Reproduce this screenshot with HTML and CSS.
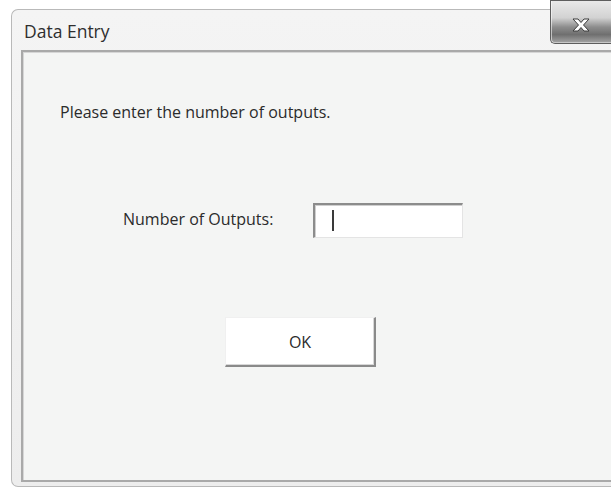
FILE: index.html
```html
<!DOCTYPE html>
<html lang="en">
<head>
<meta charset="utf-8">
<title>Data Entry</title>
<link rel="stylesheet" href="styles.css">
</head>
<body>
<div class="window">
  <div class="titlebar">
    <span class="title">Data Entry</span>
    <button class="close" aria-label="Close">
      <svg width="22" height="16" viewBox="0 0 22 16">
        <path d="M3 2 L8 2 L11 5.5 L14 2 L19 2 L13.5 8 L19 14 L14 14 L11 10.5 L8 14 L3 14 L8.5 8 Z" fill="#ffffff" stroke="#3c3c3c" stroke-width="1" stroke-linejoin="round"/>
      </svg>
    </button>
  </div>
  <div class="client">
    <p class="prompt">Please enter the number of outputs.</p>
    <div class="field">
      <label class="field-label" for="outputs">Number of Outputs:</label>
      <div class="textbox" id="outputs"><span class="caret"></span></div>
    </div>
    <button class="ok">OK</button>
  </div>
</div>
</body>
</html>
```

FILE: styles.css
```css
html, body {
  margin: 0;
  padding: 0;
  background: #ffffff;
  overflow: hidden;
  width: 611px;
  height: 489px;
  font-family: "Open Sans", "Noto Sans", "DejaVu Sans", sans-serif;
}

.window {
  margin: 9px 0 0 11px;
  width: 600px;
  height: 478px;
  border: 1px solid #b9b9b9;
  border-right: none;
  border-radius: 7px 0 0 7px;
  background: linear-gradient(180deg, #f4f4f4 0%, #ededed 100%);
  padding: 0 0 0 9px;
  box-sizing: border-box;
  display: flex;
  flex-direction: column;
}

.titlebar {
  position: relative;
  height: 40px;
  flex: none;
  display: flex;
  align-items: center;
}

.title {
  font-size: 17.5px;
  color: #2e2e2e;
  margin-left: 3px;
  margin-top: 1px;
}

/* caption close button, clipped by the top of the screen */
.close {
  position: absolute;
  right: 0;
  top: -10px;
  width: 61px;
  height: 44px;
  border: 1px solid #5e5e5e;
  border-right: none;
  border-radius: 0 0 0 5px;
  background: linear-gradient(180deg, #e9e9e9 0%, #d2d2d2 40%, #8d8d8d 62%, #6f6f6f 80%, #a6a6a6 100%);
  box-shadow: inset 1px 0 0 rgba(255,255,255,0.55), inset 0 -1px 0 rgba(255,255,255,0.4);
  padding: 0;
  display: flex;
  align-items: flex-end;
  justify-content: flex-start;
}

.close svg {
  margin: 0 0 10px 19px;
}

.client {
  flex: none;
  height: 432px;
  box-sizing: border-box;
  border-top: 2px solid #a9a9a9;
  border-left: 2px solid #a9a9a9;
  border-bottom: 2px solid #a9a9a9;
  background: #f4f5f4;
  box-shadow: inset 1px 1px 0 #d6d6d6;
  padding: 0 0 0 37px;
  color: #2b2b2b;
}

.prompt {
  margin: 50px 0 0 0;
  font-size: 16px;
  line-height: 20px;
}

.field {
  margin: 81px 0 0 63px;
  display: flex;
  align-items: center;
}

.field-label {
  font-size: 16px;
  line-height: 20px;
  width: 190px;
  margin-top: -4px;
}

.textbox {
  width: 150px;
  height: 35px;
  box-sizing: border-box;
  background: #ffffff;
  border-top: 2px solid #8c8c8c;
  border-left: 2px solid #8c8c8c;
  border-right: 1px solid #e4e4e4;
  border-bottom: 1px solid #e4e4e4;
  box-shadow: inset 1px 1px 0 #cfcfcf;
  padding: 5px 0 0 17px;
}

.caret {
  display: block;
  width: 2px;
  height: 21px;
  background: #3a3a3a;
}

.ok {
  display: block;
  margin: 79px 0 0 165px;
  width: 151px;
  height: 50px;
  background: #ffffff;
  border: none;
  border-top: 1px solid #f0f0f0;
  border-left: 1px solid #f0f0f0;
  border-right: 2px solid #8a8a8a;
  border-bottom: 2px solid #8a8a8a;
  box-shadow: inset -1px -1px 0 #d8d8d8;
  font-family: inherit;
  font-size: 16px;
  color: #2b2b2b;
  padding: 0;
}
```
